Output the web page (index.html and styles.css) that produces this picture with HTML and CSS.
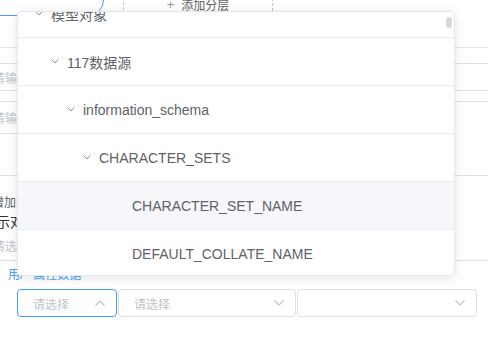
FILE: index.html
```html
<!DOCTYPE html>
<html lang="zh">
<head>
<meta charset="utf-8">
<link rel="stylesheet" href="styles.css">
</head>
<body>
<div class="page">
  <div class="toolbar">
    <div class="round-btn"></div>
    <div class="dashed-btn"><span class="plus">+</span><span>添加分层</span></div>
  </div>
  <div class="rule-top"></div>
  <div class="input wide"><span class="ph">请输入名称</span></div>
  <div class="row2">
    <div class="col-left">
      <div class="input small"><span class="ph">请输入描述</span></div>
      <div class="box">
        <div class="line1">增加<span class="link">指</span>标</div>
        <div class="line2">标示对象</div>
        <div class="line3">请选择</div>
      </div>
    </div>
    <div class="col-right">
      <div class="textarea"></div>
      <div class="rule-bottom"></div>
    </div>
  </div>
  <div class="links"><span>用/</span><span>属性数据</span></div>
  <div class="selects">
    <div class="select focus"><span class="ph">请选择</span>
      <svg class="arrow" width="10" height="6" viewBox="0 0 10 6"><path d="M0.5 5.5 L5 1 L9.5 5.5" fill="none" stroke="#c0c4cc" stroke-width="1.2"/></svg>
    </div>
    <div class="select mid"><span class="ph">请选择</span>
      <svg class="arrow" width="10" height="6" viewBox="0 0 10 6"><path d="M0.5 0.5 L5 5 L9.5 0.5" fill="none" stroke="#c0c4cc" stroke-width="1.2"/></svg>
    </div>
    <div class="select last"><span class="ph"></span>
      <svg class="arrow" width="10" height="6" viewBox="0 0 10 6"><path d="M0.5 0.5 L5 5 L9.5 0.5" fill="none" stroke="#c0c4cc" stroke-width="1.2"/></svg>
    </div>
  </div>
</div>

<div class="popover">
  <div class="tree">
    <div class="node lvl0"><svg class="chev" width="8" height="5" viewBox="0 0 8 5"><path d="M0.5 0.5 L4 4 L7.5 0.5" fill="none" stroke="#909399" stroke-width="1"/></svg><span>模型对象</span></div>
    <div class="node lvl1"><svg class="chev" width="8" height="5" viewBox="0 0 8 5"><path d="M0.5 0.5 L4 4 L7.5 0.5" fill="none" stroke="#909399" stroke-width="1"/></svg><span>117数据源</span></div>
    <div class="node lvl2"><svg class="chev" width="8" height="5" viewBox="0 0 8 5"><path d="M0.5 0.5 L4 4 L7.5 0.5" fill="none" stroke="#909399" stroke-width="1"/></svg><span>information_schema</span></div>
    <div class="node lvl3"><svg class="chev" width="8" height="5" viewBox="0 0 8 5"><path d="M0.5 0.5 L4 4 L7.5 0.5" fill="none" stroke="#909399" stroke-width="1"/></svg><span>CHARACTER_SETS</span></div>
    <div class="node leaf hover"><span>CHARACTER_SET_NAME</span></div>
    <div class="node leaf"><span>DEFAULT_COLLATE_NAME</span></div>
  </div>
  <div class="thumb"></div>
</div>
</body>
</html>
```

FILE: styles.css
```css
* { box-sizing: border-box; margin: 0; padding: 0; }
html, body { width: 488px; height: 337px; overflow: hidden; background: #fff; }
body {
  position: relative;
  font-family: "Liberation Sans", "Noto Sans CJK SC", sans-serif;
  color: #606266;
}

.page { margin-left: -30px; margin-top: -16px; width: 550px; }

.toolbar { display: flex; align-items: flex-start; height: 32px; }
.round-btn {
  margin-left: -10px; width: 144px; height: 32px;
  border: 1px solid #409eff; border-radius: 16px;
}
.dashed-btn {
  margin-left: 19px; margin-top: 8px; width: 150px; height: 24px;
  border: 1px dashed #c0c4cc; border-radius: 4px;
  display: flex; align-items: center; justify-content: center; gap: 7px;
  font-size: 12px; color: #606266;
}
.plus { color: #909399; font-size: 13px; }

.rule-top { margin-top: 31px; height: 1px; background: #e8eaef; }

.input {
  border: 1px solid #dcdfe6; border-radius: 4px;
  display: flex; align-items: center; padding-left: 22px;
  font-size: 12px;
}
.ph { color: #c0c4cc; font-size: 12px; }
.input.wide { margin-top: 15px; height: 28px; width: 560px; }

.row2 { margin-top: 10px; display: grid; grid-template-columns: 330px 210px; column-gap: 10px; }
.input.small { height: 33px; }
.box {
  margin-top: 41px; height: 86px;
  border: 1px solid #dcdfe6; border-radius: 4px;
  padding: 15px 0 0 30px; font-size: 12px;
}
.line1, .line2, .line3 { height: 20px; display: flex; align-items: center; white-space: nowrap; }
.line1 { margin-left: -9px; color: #606266; }
.line1 .link { color: #409eff; }
.line2 { margin-left: -19px; color: #303133; font-size: 14px; }
.line3 { margin-left: -8px; margin-top: 4px; color: #c0c4cc; }

.textarea { height: 75px; border: 1px solid #dcdfe6; border-radius: 4px; }
.rule-bottom { margin-top: 84px; height: 1px; background: #dcdfe6; }

.links {
  margin-top: 6px; height: 16px; line-height: 16px; padding-left: 38px;
  font-size: 12px; color: #409eff; display: flex; gap: 10px;
}

.selects { margin-top: 6px; margin-left: 47px; display: flex; gap: 1px; }
.select {
  height: 28px; border: 1px solid #dcdfe6; border-radius: 4px;
  display: flex; align-items: center; justify-content: space-between;
  padding: 0 11px 0 15px;
}
.select.focus { width: 100px; border-color: #409eff; }
.select.mid { width: 178px; }
.select.last { width: 180px; }

.popover {
  position: absolute; left: 17px; top: 11px; width: 438px; height: 265px;
  background: #fff; border: 1px solid #e4e7ed; border-radius: 4px;
  box-shadow: 0 2px 12px 0 rgba(0, 0, 0, 0.1);
  overflow: hidden;
}
.tree { margin-top: -22px; }
.node {
  height: 48px; border-bottom: 1px solid #ebeef5;
  display: flex; align-items: center;
  font-size: 14px; color: #606266; white-space: nowrap;
}
.chev { margin-right: 8px; flex: none; }
.lvl0 { padding-left: 17px; }
.lvl1 { padding-left: 33px; }
.lvl2 { padding-left: 49px; }
.lvl3 { padding-left: 65px; }
.leaf { padding-left: 114px; }
.hover { background: #f5f7fa; }

.thumb {
  position: absolute; right: 2px; top: 5px; width: 6px; height: 11px;
  border-radius: 3px; background: #d8d9dc;
}
```
